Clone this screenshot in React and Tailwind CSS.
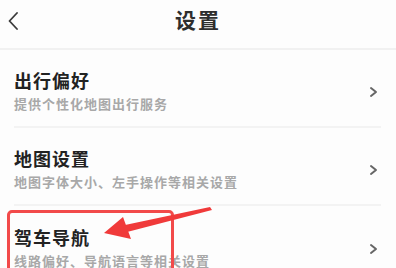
import React from "react";

const ROWS = [
  { title: "出行偏好", desc: "提供个性化地图出行服务" },
  { title: "地图设置", desc: "地图字体大小、左手操作等相关设置" },
  { title: "驾车导航", desc: "线路偏好、导航语言等相关设置" },
];

function Chevron({ left }) {
  return (
    <svg width="10" height="18" viewBox="0 0 10 18" fill="none">
      <path
        d={left ? "M9 1L1.5 9L9 17" : "M2 5L7 9L2 13"}
        stroke={left ? "#3a3a3a" : "#666"}
        strokeWidth={left ? 1.8 : 2}
        strokeLinecap="round"
        strokeLinejoin="round"
      />
    </svg>
  );
}

export default function App() {
  return (
    <div
      className="relative w-[396px] h-[268px] overflow-hidden bg-[#fdfdfd]"
      style={{ fontFamily: '"Noto Sans CJK SC", "Noto Sans", sans-serif' }}
    >
      {/* Header */}
      <header className="relative h-[50px] flex items-center justify-center border-b-2 border-[#f1f1f1]">
        <div className="absolute left-[8px] top-[12px]">
          <Chevron left />
        </div>
        <h1 className="text-[21px] font-bold tracking-[2px] text-[#2e2e2e] leading-none -mt-[10px]">设置</h1>
      </header>

      {/* Rows */}
      <div>
        {ROWS.map((row, i) => (
          <div key={i} className="flex items-center pl-[14px] pr-[15px]">
            <div
              className={
                "flex-1 flex items-center h-[78px] " +
                (i < ROWS.length - 1 ? "border-b-2 border-[#f3f3f3]" : "")
              }
            >
              <div className="flex-1 pt-[5px]">
                <div className="text-[18px] font-bold tracking-[1px] text-[#222] leading-[22px]">
                  {row.title}
                </div>
                <div className="mt-[5px] text-[13px] font-bold tracking-[1px] text-[#a8a8a8] leading-[16px]">
                  {row.desc}
                </div>
              </div>
              <div className="mr-[2px] mt-[8px]">
                <Chevron />
              </div>
            </div>
          </div>
        ))}
      </div>

      {/* Highlight box */}
      <div className="absolute left-[7px] top-[210px] w-[167px] h-[70px] border-[3px] border-[#f24a4a] rounded-[5px]" />

      {/* Arrow */}
      <svg className="absolute left-0 top-0" width="396" height="268" viewBox="0 0 396 268">
        <path d="M210 207 L125 225 L127 232 L212 210 Z" fill="#f03a3a" />
        <path d="M104 233 L123 217 L131 239 Z" fill="#f03a3a" />
      </svg>
    </div>
  );
}
